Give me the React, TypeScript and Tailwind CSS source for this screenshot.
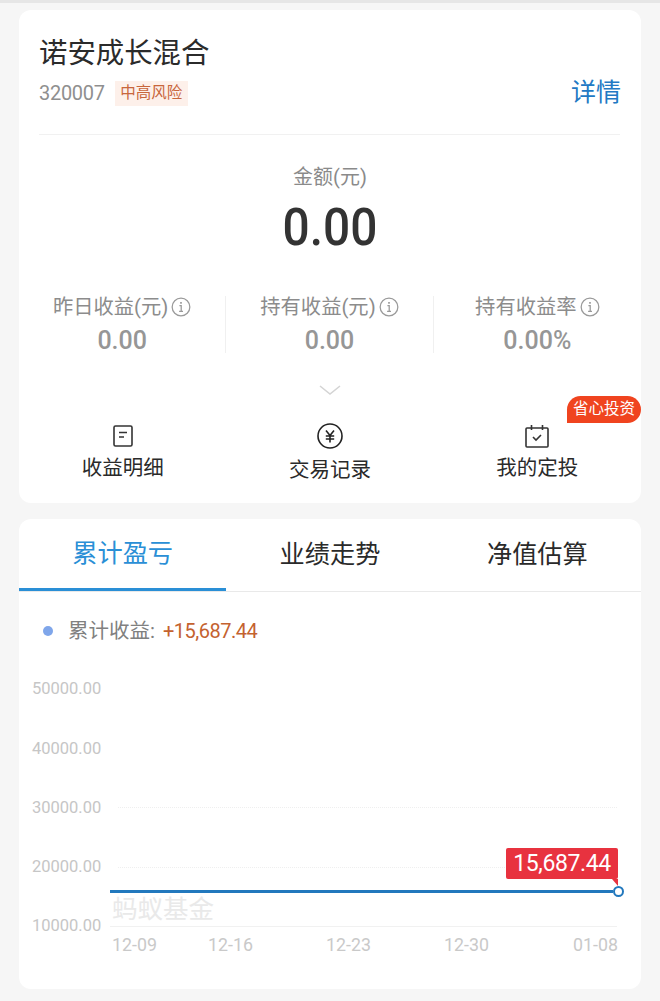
const FONT = "font-['Roboto','Noto_Sans_CJK_SC',sans-serif]";

const stats = [
  { label: "昨日收益(元)", value: "0.00" },
  { label: "持有收益(元)", value: "0.00" },
  { label: "持有收益率", value: "0.00%" },
];

const yLabels = ["50000.00", "40000.00", "30000.00", "20000.00", "10000.00"];

const InfoIcon = () => (
  <svg width="20" height="20" viewBox="0 0 19 19" fill="none" stroke="#9a9a9a" strokeWidth="1.2">
    <circle cx="9.5" cy="9.5" r="8.4" />
    <path d="M8 8.2h1.7v5.3M7.7 13.6h3.7" />
    <path d="M9.5 4.8v1.6" strokeWidth="1.6" />
  </svg>
);

const BillIcon = () => (
  <svg width="20" height="22" viewBox="0 0 20 22" fill="none" stroke="#333" strokeWidth="1.6">
    <rect x="1" y="1" width="18" height="20" rx="1.5" />
    <path d="M6 7.5h8M6 12h5" />
  </svg>
);

const YuanIcon = () => (
  <svg width="26" height="26" viewBox="0 0 26 26" fill="none" stroke="#222" strokeWidth="1.6">
    <circle cx="13" cy="13" r="12" />
    <path d="M9 7.5l4 5 4-5M13 12.5v7M8.8 13h8.4M8.8 16h8.4" />
  </svg>
);

const CalendarIcon = () => (
  <svg width="24" height="24" viewBox="0 0 24 24" fill="none" stroke="#333" strokeWidth="1.6">
    <rect x="1" y="4" width="22" height="19" rx="1" />
    <path d="M6.5 1v5M17.5 1v5M8 13l3 3 5-5" />
  </svg>
);

const Chart = () => (
  <div className="relative mt-[14px] ml-[13px] w-[596px]">
    <div className="flex flex-col pr-[11px]">
      {yLabels.map((label, i) => (
        <div key={label} className="flex h-[59.2px] items-center">
          <span className="w-[78px] shrink-0 text-[16.5px] leading-none text-[#c6c6c6]">{label}</span>
          {i < 4 ? (
            <div className={i < 2 ? "flex-1" : "ml-[8px] flex-1 border-t border-dotted border-[#efefef]"} />
          ) : (
            <div className="flex-1 border-t border-[#f1f1f1]" />
          )}
        </div>
      ))}
    </div>
    {/* value line, sits over the grid */}
    <div className="absolute left-[78px] top-[230px] h-[3px] w-[503px] bg-[#2278bd]" />
    <div className="absolute left-[581px] top-[226px] h-[11px] w-[11px] rounded-full border-[2.5px] border-[#2278bd] bg-white" />
    <div className="absolute left-[474px] top-[188px] flex h-[31px] w-[112px] items-center justify-center rounded-[2px] bg-[#e8323f] text-[23px] leading-none tracking-[-0.4px] text-white">
      15,687.44
    </div>
    <div className="absolute left-[580px] top-[219px] h-0 w-0 border-l-[6px] border-t-[7px] border-l-transparent border-t-[#e8323f]" />
    <div className="absolute left-[80px] top-[234px] text-[25.5px] leading-[30px] text-[#e9e9e9]">蚂蚁基金</div>
    <div className="ml-[80px] mt-[-24px] flex h-[26px] whitespace-nowrap text-[17.8px] leading-[26px] text-[#c9c9c9]">
      <span className="w-[44px]">12-09</span>
      <span className="ml-[52px] w-[44px]">12-16</span>
      <span className="ml-[74px] w-[44px]">12-23</span>
      <span className="ml-[74px] w-[44px]">12-30</span>
      <span className="ml-[85px] w-[44px]">01-08</span>
    </div>
  </div>
);

export default function App() {
  return (
    <div className={`${FONT} h-[1001px] w-[660px] overflow-hidden border-t-[3px] border-[#e6e6e6] bg-[#f6f6f6] pt-[7px]`}>
      <div className="relative mx-[19px] h-[493px] w-[622px] rounded-[12px] bg-white">
        <div className="ml-[20px] mr-[21px] flex h-[125px] items-end justify-between border-b border-[#f1f1f1] pb-[28px]">
          <div>
            <h1 className="text-[28.4px] font-normal leading-[42px] text-[#2b2b2b]">诺安成长混合</h1>
            <div className="mt-[6px] flex items-center gap-[10px]">
              <span className="text-[20px] leading-[25px] tracking-[-0.3px] text-[#8f8f8f]">320007</span>
              <span className="flex h-[25px] w-[73px] items-center justify-center bg-[#fdf0ea] text-[15.5px] text-[#c8663c]">
                中高风险
              </span>
            </div>
          </div>
          <span className="mb-[-2px] mr-[-1px] text-[25px] leading-[30px] text-[#2279c4]">详情</span>
        </div>

        <div className="mt-[28px] text-center text-[20px] leading-[28px] text-[#8a8a8a]">金额(元)</div>
        <div className="mt-[9px] scale-x-[0.92] text-center text-[52px] font-medium leading-[56px] text-[#333]">0.00</div>

        <div className="mt-[40px] grid grid-cols-3">
          {stats.map((s, i) => (
            <div key={s.label} className={`flex h-[57px] flex-col items-center ${i < 2 ? "border-r border-[#f0f0f0]" : ""}`}>
              <div className="flex items-center gap-[3px] text-[20.3px] leading-[22px] text-[#8c8c8c]">
                {s.label}
                <InfoIcon />
              </div>
              <div className="mt-[8px] text-[25px] font-medium leading-[30px] text-[#969696]">{s.value}</div>
            </div>
          ))}
        </div>

        <div className="mt-[31px] flex justify-center">
          <svg width="24" height="12" viewBox="0 0 24 12" fill="none" stroke="#d4d4d4" strokeWidth="1.6">
            <path d="M2 2l10 8 10-8" />
          </svg>
        </div>

        <div className="absolute right-0 top-[386px] flex h-[27px] w-[74px] items-center justify-center rounded-[14px] rounded-bl-none bg-[#f0441f] text-[15.5px] leading-none text-white">
          省心投资
        </div>

        <div className="mt-[26px] grid grid-cols-3 text-[20.5px] leading-[28px] text-[#2a2a2a]">
          <div className="flex flex-col items-center">
            <div className="flex h-[28px] items-center">
              <BillIcon />
            </div>
            <span className="mt-[4px]">收益明细</span>
          </div>
          <div className="flex flex-col items-center">
            <div className="flex h-[28px] items-center">
              <YuanIcon />
            </div>
            <span className="mt-[6px]">交易记录</span>
          </div>
          <div className="flex flex-col items-center">
            <div className="flex h-[28px] items-center">
              <CalendarIcon />
            </div>
            <span className="mt-[4px]">我的定投</span>
          </div>
        </div>
      </div>

      <div className="mx-[19px] mt-[16px] h-[470px] w-[622px] rounded-[12px] bg-white">
        <div className="grid h-[73px] grid-cols-3 border-b border-[#e9e9e9] text-[25.2px] leading-none text-[#2a2a2a]">
          <div className="flex items-center justify-center border-b-[3px] border-[#2a8fd6] text-[#2a8fd6]">累计盈亏</div>
          <div className="flex items-center justify-center">业绩走势</div>
          <div className="flex items-center justify-center">净值估算</div>
        </div>
        <div className="mt-[24px] flex h-[30px] items-center pl-[24px] text-[20.5px]">
          <span className="h-[10px] w-[10px] rounded-full bg-[#7fa6ea]" />
          <span className="ml-[15px] text-[#808080]">累计收益:</span>
          <span className="ml-[8px] text-[20px] tracking-[-0.5px] text-[#c4622f]">+15,687.44</span>
        </div>
        <Chart />
      </div>
    </div>
  );
}
